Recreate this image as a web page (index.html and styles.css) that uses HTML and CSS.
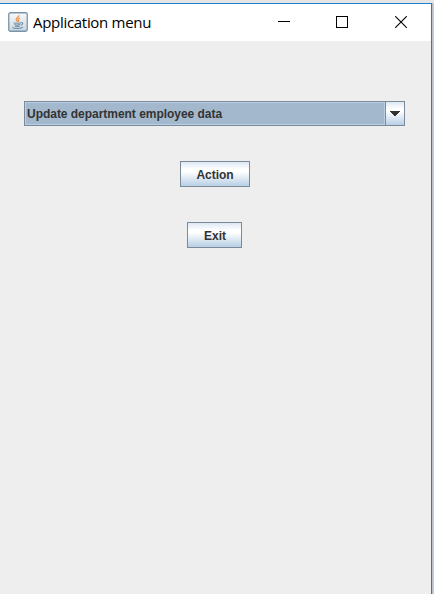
FILE: index.html
```html
<!DOCTYPE html>
<html lang="en">
<head>
<meta charset="utf-8">
<title>Application menu</title>
<link rel="stylesheet" href="styles.css">
</head>
<body>
<div class="window">
  <header class="titlebar">
    <svg class="app-icon" width="20" height="20" viewBox="0 0 20 20">
      <defs>
        <linearGradient id="tile" x1="0" y1="0" x2="0" y2="1">
          <stop offset="0" stop-color="#f8fafb"/>
          <stop offset="1" stop-color="#c9d6de"/>
        </linearGradient>
      </defs>
      <rect x=".75" y=".75" width="18.5" height="18.5" rx="1.8" fill="url(#tile)" stroke="#7994a8" stroke-width="1.3"/>
      <path d="M10.8 3.2c.7 1.8-3.5 2.7-2.6 4.6.3.8 1.3 1.1 1.2 2.2M12 6c-2 .8-2.3 1.5-1.5 2.4.5.6.2 1.2-.3 1.7" fill="none" stroke="#e8924c" stroke-width="1.3"/>
      <path d="M5.6 10.7c2 .7 5.3.6 7.3 0M6.4 12.6c2 .7 4.2.6 5.7 0M7 14.3c1.5.5 3.3.5 4.6 0M13.2 10.7c2.2-.6 2 1.8-.4 2.5M4.5 15.3c1.5 1.7 8.5 1.5 10.3-.1" fill="none" stroke="#6f8ea8" stroke-width="1.1"/>
    </svg>
    <h1 class="title">Application menu</h1>
    <div class="controls">
      <svg width="12" height="12" viewBox="0 0 12 12" shape-rendering="crispEdges"><path d="M0 5.5h12" stroke="#000"/></svg>
      <svg width="12" height="12" viewBox="0 0 12 12" shape-rendering="crispEdges"><rect x=".5" y=".5" width="11" height="11" fill="none" stroke="#000"/></svg>
      <svg class="close" width="12" height="12" viewBox="0 0 12 12"><path d="M.2.2l11.6 11.6M11.8.2L.2 11.8" stroke="#000" stroke-width="1.1"/></svg>
    </div>
  </header>
  <main class="content">
    <div class="combo" role="combobox" aria-expanded="false" tabindex="0">
      <span class="combo-value"><span class="combo-text">Update department employee data</span></span>
      <span class="combo-arrow">
        <svg width="10" height="5" viewBox="0 0 10 5" shape-rendering="crispEdges"><path d="M0 0h10v1H0zM1 1h8v1H1zM2 2h6v1H2zM3 3h4v1H3zM4 4h2v1H4z" fill="#333"/></svg>
      </span>
    </div>
    <button class="button action" type="button"><span>Action</span></button>
    <button class="button exit" type="button"><span>Exit</span></button>
  </main>
</div>
</body>
</html>
```
FILE: styles.css
```css
* { box-sizing: border-box; }
body {
  margin: 0;
  height: 594px;
  padding: 3px 2px 0 0;
  overflow: hidden;
  background: linear-gradient(90deg, #b5bdc5, #ccd0d4) right 3px / 2px 591px no-repeat, #e6e6e6;
}
.window {
  height: 591px;
  border-top: 1px solid #1c7fcf;
  border-right: 1px solid #1c7fcf;
  background: #eee;
}
.titlebar {
  display: flex;
  align-items: center;
  height: 37px;
  padding: 0 24px 0 8px;
  background: #fff;
}
.app-icon { flex: none; margin-top: -2px; }
.title {
  margin: -2px 0 0 5px;
  font: 400 15px/20px "Open Sans", "Noto Sans", sans-serif;
  letter-spacing: -0.3px;
  white-space: nowrap;
  color: #000;
}
.controls {
  display: flex;
  gap: 46px;
  margin-left: auto;
  margin-top: -1px;
}
.controls svg { display: block; }
.controls .close { margin-left: 1px; }
.content {
  display: flex;
  flex-direction: column;
  align-items: center;
  padding: 60px 26px 0 24px;
  font: 700 12px/14px "Liberation Sans", Arial, sans-serif;
  letter-spacing: -0.03px;
  color: #333;
}
.combo {
  display: flex;
  width: 381px;
  height: 25px;
  border: 1px solid #7a8a99;
}
.combo-value {
  display: flex;
  align-items: center;
  flex: 1;
  padding-left: 1px;
  border: 1px solid #b8cfe5;
  background: #a3b8cc;
}
.combo-arrow {
  display: flex;
  align-items: center;
  justify-content: center;
  width: 19px;
  border-left: 1px solid #7a8a99;
  background: linear-gradient(#dde8f3, #fff 30%, #fff 40%, #b8cfe5);
}
.button {
  height: 26px;
  padding: 2px 0 0 1px;
  border: 1px solid #7a8a99;
  border-radius: 0;
  background: linear-gradient(#dde8f3, #fff 30%, #fff 40%, #b8cfe5);
  color: #333;
  font: inherit;
  letter-spacing: -0.05px;
}
.action { width: 70px; margin-top: 35px; }
.exit { width: 55px; margin-top: 35px; }
```
